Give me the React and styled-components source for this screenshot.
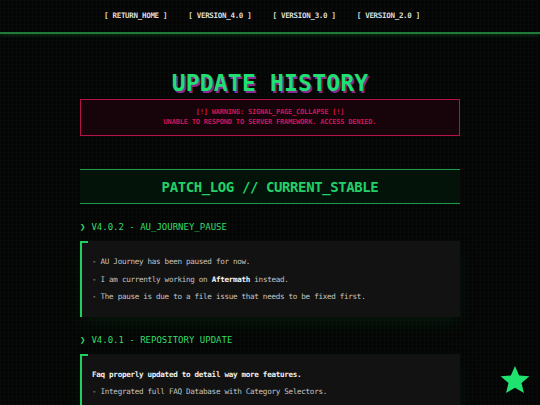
import styled, { createGlobalStyle } from "styled-components";

const GlobalStyle = createGlobalStyle`
  html, body {
    margin: 0;
    padding: 0;
    background-color: #050505;
  }
  body {
    font-family: "DejaVu Sans Mono", "Liberation Mono", monospace;
    color: #c8c8c8;
    background-image:
      repeating-linear-gradient(90deg, rgba(40, 70, 50, 0.07) 0 1px, transparent 1px 4px),
      repeating-linear-gradient(0deg, rgba(40, 70, 50, 0.05) 0 1px, transparent 1px 4px);
    min-height: 405px;
    overflow: hidden;
  }
`;

const Nav = styled.nav`
  display: flex;
  justify-content: center;
  gap: 21px;
  padding: 11px 16px 0 0;
  height: 21px;
  border-bottom: 2px solid #1f7a3a;
  box-shadow: 0 1px 4px rgba(40, 200, 90, 0.25);
`;

const NavLink = styled.a`
  font-size: 7.5px;
  font-weight: bold;
  letter-spacing: -0.3px;
  line-height: 10px;
  color: #dcdcdc;
  white-space: pre;
  cursor: pointer;
`;

const Main = styled.main`
  width: 380px;
  margin: 0 auto;
  padding-top: 37px;
`;

const Title = styled.h1`
  margin: 0 0 4px;
  text-align: center;
  font-size: 23px;
  font-weight: bold;
  letter-spacing: 0.2px;
  line-height: 24px;
  color: #1fe070;
  text-shadow: 1.5px 1.5px 0 #8a2a90;
`;

const Warning = styled.div`
  border: 1px solid #b3124a;
  background: #16040a;
  padding: 7px 0 8px;
  text-align: center;
  font-size: 7px;
  font-weight: bold;
  letter-spacing: -0.2px;
  line-height: 10px;
  color: #d0144f;
`;

const PatchHeader = styled.h2`
  margin: 33px 0 0;
  border-top: 1px solid #1f9a48;
  border-bottom: 1px solid #1f9a48;
  background: #03130a;
  height: 33px;
  display: flex;
  align-items: center;
  justify-content: center;
  font-size: 14px;
  letter-spacing: -0.4px;
  font-weight: bold;
  color: #22d068;
`;

const Section = styled.section`
  margin-top: ${(p) => p.$top}px;
`;

const VersionHead = styled.h3`
  margin: 0 0 8px;
  font-size: 9px;
  font-weight: normal;
  line-height: 12px;
  color: #34dc68;
  display: flex;
  gap: 6px;
`;

const Chevron = styled.span`
  font-weight: bold;
`;

const Card = styled.div`
  position: relative;
  background: #121212;
  border-left: 2px solid #1fd060;
  padding: 12px 10px 11px 10px;
  box-shadow: 0 8px 18px rgba(20, 120, 50, 0.12);

  &::before {
    content: "";
    position: absolute;
    left: -2px;
    top: 0;
    width: 8px;
    height: 2px;
    background: #1fd060;
  }
`;

const Line = styled.p`
  margin: 0;
  font-size: 7.6px;
  letter-spacing: -0.3px;
  line-height: 17.5px;
  color: ${(p) => (p.$lead ? "#f0f0f0" : "#c4c4c4")};
  font-weight: ${(p) => (p.$lead ? "bold" : "normal")};
`;

const Strong = styled.b`
  color: #f4f4f4;
`;

const Star = styled.svg`
  position: fixed;
  right: 9px;
  bottom: 9px;
  width: 32px;
  height: 32px;
`;

export default function App() {
  return (
    <>
      <GlobalStyle />
      <Nav>
        <NavLink>[ RETURN_HOME ]</NavLink>
        <NavLink>[ VERSION_4.0 ]</NavLink>
        <NavLink>[ VERSION_3.0 ]</NavLink>
        <NavLink>[ VERSION_2.0 ]</NavLink>
      </Nav>
      <Main>
        <Title>UPDATE HISTORY</Title>
        <Warning>
          <div>[!] WARNING: SIGNAL_PAGE_COLLAPSE [!]</div>
          <div>UNABLE TO RESPOND TO SERVER FRAMEWORK. ACCESS DENIED.</div>
        </Warning>
        <PatchHeader>PATCH_LOG // CURRENT_STABLE</PatchHeader>

        <Section $top={17}>
          <VersionHead>
            <Chevron>❯</Chevron>V4.0.2 - AU_JOURNEY_PAUSE
          </VersionHead>
          <Card>
            <Line>- AU Journey has been paused for now.</Line>
            <Line>
              - I am currently working on <Strong>Aftermath</Strong> instead.
            </Line>
            <Line>- The pause is due to a file issue that needs to be fixed first.</Line>
          </Card>
        </Section>

        <Section $top={17}>
          <VersionHead>
            <Chevron>❯</Chevron>V4.0.1 - REPOSITORY UPDATE
          </VersionHead>
          <Card>
            <Line $lead>Faq properly updated to detail way more features.</Line>
            <Line>- Integrated full FAQ Database with Category Selectors.</Line>
            <Line>- Overhauled category descriptions (Previously Using Generic Only).</Line>
          </Card>
        </Section>
      </Main>
      <Star viewBox="0 0 24 24">
        <path
          d="M12 1.5l3.1 7.1 7.7.6-5.9 5 1.8 7.6L12 17.8l-6.7 4 1.8-7.6-5.9-5 7.7-.6z"
          fill="#1fe36e"
        />
      </Star>
    </>
  );
}
